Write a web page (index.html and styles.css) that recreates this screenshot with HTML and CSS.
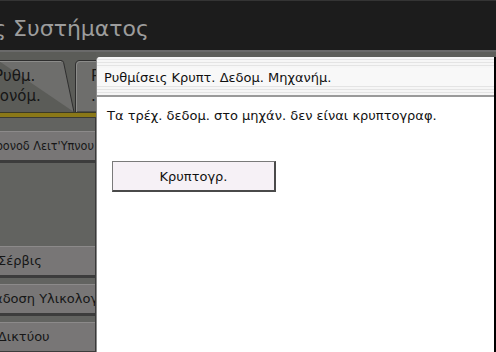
FILE: index.html
```html
<!DOCTYPE html>
<html lang="el">
<head>
<meta charset="UTF-8">
<title>Ρυθμίσεις Συστήματος</title>
<link rel="stylesheet" href="styles.css">
</head>
<body>
<div class="screen">
<header class="titlebar">
<h1>Ρυθμίσεις Συστήματος</h1>
</header>

<div class="main">
<aside class="side">
<div class="tabs">
<div class="tab tab-first">
<svg width="76" height="52" viewBox="0 0 76 52">
<path d="M-2 0.5 H61 Q63 0.5 63.6 2.5 L74 52" fill="#6e6e6c" stroke="#2e2e2e" stroke-width="1"/>
<path d="M-2 1.5 H61" stroke="#8c8c8a" stroke-width="1"/>
</svg>
<span class="tab-label"><span class="tab-line">Ρυθμ.</span><span class="tab-line tab-line-wide">Χρονόμ.</span></span>
</div>
<div class="tab tab-second">
<svg width="40" height="52" viewBox="0 0 40 52">
<path d="M0.5 52 V5 Q0.5 0.5 5 0.5 H40 V52 Z" fill="#6e6e6c" stroke="#2e2e2e" stroke-width="1"/>
<path d="M1.5 52 V5 Q1.5 1.5 5 1.5 H40" fill="none" stroke="#8c8c8a" stroke-width="1"/>
</svg>
<span class="tab-label"><span class="tab-line">Ρυθμ.</span><span class="tab-line">.</span></span>
</div>
</div>
<div class="tab-rule"></div>

<div class="menu">
<div class="menu-item menu-item-fit"><span>Ρύθμ. Χρονοδ Λειτ'Υπνου</span></div>
<div class="menu-spacer"></div>
<div class="menu-item menu-service">Σέρβις</div>
<div class="menu-item menu-firmware">Μεταδοση Υλικολογισμικού</div>
<div class="menu-item menu-network">Ρυθμ. Δικτύου</div>
</div>
</aside>

<section class="dialog">
<div class="dialog-head">
<h2>Ρυθμίσεις Κρυπτ. Δεδομ. Μηχανήμ.</h2>
</div>
<div class="dialog-body">
<p>Τα τρέχ. δεδομ. στο μηχάν. δεν είναι κρυπτογραφ.</p>
<button class="action-btn">Κρυπτογρ.</button>
</div>
</section>
</div>
</div>
</body>
</html>
```

FILE: styles.css
```css
body {
margin: 0;
font-family: 'DejaVu Sans', 'Noto Sans', sans-serif;
background: #1c1c1c;
}
.screen {
width: 496px;
height: 352px;
overflow: hidden;
display: flex;
flex-direction: column;
background: #1c1c1c;
}
.titlebar {
height: 50px;
flex: none;
border-top: 1px solid #343434;
box-sizing: border-box;
overflow: hidden;
white-space: nowrap;
}
.titlebar h1 {
margin: 15px 0 0 -101px;
font-size: 22px;
line-height: 26px;
font-weight: normal;
color: #9c9c9c;
}
.main {
flex: 1;
display: flex;
border-top: 2px solid #6a6a6a;
background: #5d5e5a;
}
.side {
width: 96px;
flex: none;
display: flex;
flex-direction: column;
overflow: hidden;
background: #626360;
}
.tabs {
height: 60px;
display: flex;
align-items: flex-end;
background: #5b5c58;
}
.tab {
display: grid;
height: 52px;
flex: none;
}
.tab > * {
grid-area: 1 / 1;
}
.tab-first {
width: 76px;
}
.tab-second {
width: 40px;
margin-left: -1px;
}
.tab-label {
display: flex;
flex-direction: column;
padding-top: 6px;
font-size: 15px;
line-height: 20px;
color: #161616;
white-space: nowrap;
}
.tab-first .tab-label {
margin-left: -6px;
}
.tab-first .tab-line-wide {
margin-left: -14px;
}
.tab-second .tab-label {
padding-left: 16px;
}
.tab-rule {
height: 4px;
background: #8a7818;
border-top: 1px solid #3c3a26;
border-bottom: 1px solid #3a3a36;
}
.menu {
flex: 1;
display: flex;
flex-direction: column;
gap: 6px;
padding-top: 13px;
border-right: 1px solid #3a3a3a;
}
.menu-item {
height: 28px;
line-height: 28px;
background: #787676;
border-top: 1px solid #8c8a8a;
border-bottom: 3px solid #3c3c3c;
font-size: 13px;
color: #161616;
white-space: nowrap;
overflow: hidden;
}
.menu-item-fit {
display: flex;
justify-content: flex-end;
padding-right: 1px;
font-family: 'DejaVu Sans Condensed', 'DejaVu Sans', sans-serif;
font-stretch: condensed;
font-size: 12.5px;
}
.menu-item-fit span {
flex: none;
}
.menu-service {
margin-left: -2px;
}
.menu-firmware {
margin-left: -32px;
}
.menu-network {
margin-left: -42px;
}
.menu-spacer {
height: 71px;
}
.dialog {
flex: 1;
margin-top: 5px;
display: flex;
flex-direction: column;
background: #fff;
border-left: 1px solid #8a8a8a;
border-right: 2px solid #000;
border-bottom: 2px solid #000;
border-top-left-radius: 4px;
overflow: hidden;
}
.dialog-head {
height: 40px;
padding: 11px 0 9px;
box-sizing: border-box;
background: repeating-linear-gradient(#f6f6f6 0, #f6f6f6 2px, #e4e4e4 2px, #e4e4e4 3px);
border-bottom: 2px solid #9a9a9a;
display: flex;
}
.dialog-head h2 {
flex: 1;
margin: 0;
padding-left: 7px;
font-size: 13px;
font-weight: normal;
line-height: 20px;
background: #f8f8f8;
color: #111;
}
.dialog-body {
flex: 1;
padding: 9px 0 0 10px;
}
.dialog-body p {
margin: 0;
font-size: 13px;
line-height: 20px;
color: #111;
}
.action-btn {
display: block;
margin: 35px 0 0 5px;
width: 164px;
height: 31px;
background: #f6f1f6;
border: 1px solid #7a7a7a;
border-right: 2px solid #4a4a4a;
border-bottom: 2px solid #4a4a4a;
font-family: inherit;
font-size: 13px;
color: #111;
padding: 0;
}
```
